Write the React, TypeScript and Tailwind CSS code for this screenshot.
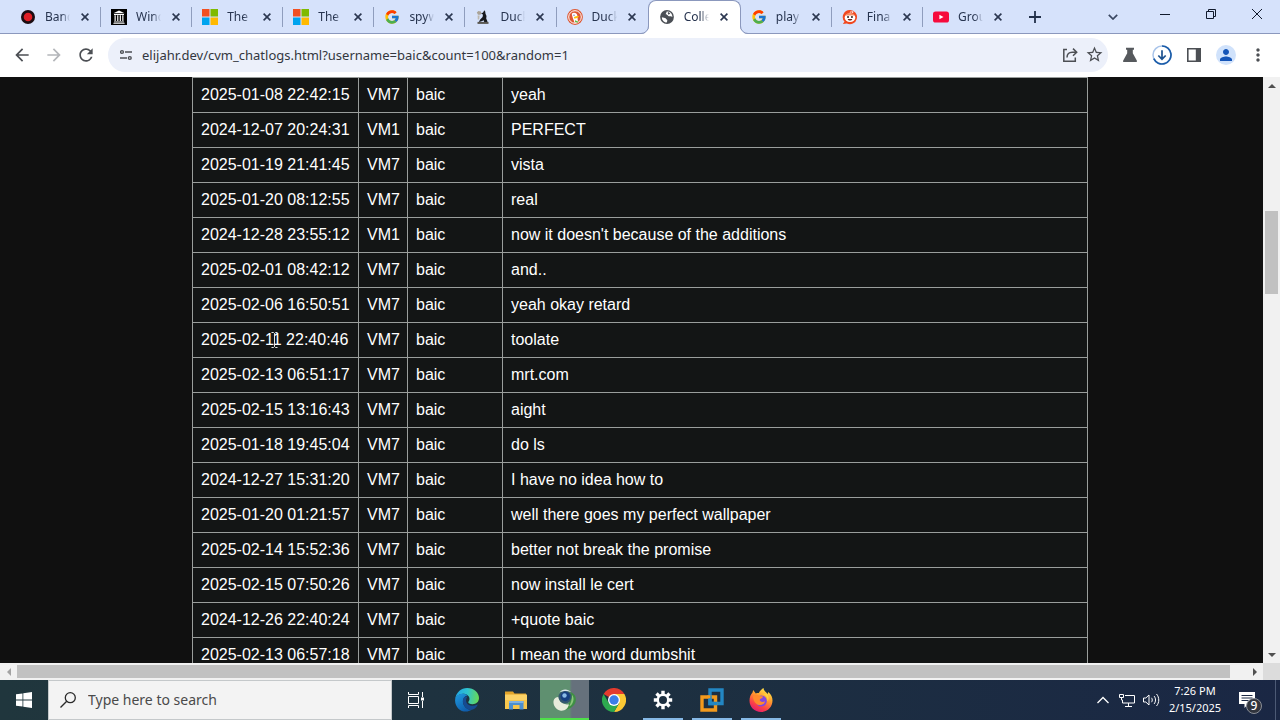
import { useId, type ReactNode } from "react";
import { MdArrowBack, MdArrowForward, MdRefresh, MdStarBorder, MdMoreVert, MdPerson } from "react-icons/md";
import { FcGoogle } from "react-icons/fc";

/* ---------- tab favicons ---------- */

const RecordIcon = () => (
  <svg viewBox="0 0 16 16" className="size-4">
    <circle cx="8" cy="8" r="7" fill="#1c0d12" />
    <circle cx="8" cy="8" r="4.3" fill="#e01f26" />
  </svg>
);

const ArchiveIcon = () => (
  <svg viewBox="0 0 16 16" className="size-4">
    <rect width="16" height="16" fill="#000" />
    <path d="M2.4 4.2 8 1.4l5.6 2.8zM3 5h10v.9H3zM3 12.4h10v.8H3zM2.4 13.8h11.2v1H2.4z" fill="#fff" />
    <path d="M3.5 6.3h1.3v5.7H3.5zM6.1 6.3h1.3v5.7H6.1zM8.7 6.3H10v5.7H8.7zM11.2 6.3h1.3v5.7h-1.3z" fill="#e8e8e8" />
  </svg>
);

const MicrosoftIcon = () => (
  <svg viewBox="0 0 16 16" className="size-4">
    <path d="M0 0h7.5v7.5H0z" fill="#f25022" />
    <path d="M8.5 0H16v7.5H8.5z" fill="#7fba00" />
    <path d="M0 8.5h7.5V16H0z" fill="#00a4ef" />
    <path d="M8.5 8.5H16V16H8.5z" fill="#ffb900" />
  </svg>
);

const StatueIcon = () => (
  <svg viewBox="0 0 16 16" className="size-4">
    <path d="M1.800 3.600 3.400 2l2.400.4.8 2-1.200 1.400H3z" fill="#aaa397" />
    <path d="M9.200 1.200l1 1.300.3 2.300 1 2.200-.3 2.500 1.300 3-.6 1.300H9.400l-.7-2.500L6 12.600l-2.200.3 1.400-2.300L7.600 8 8 5.500 6.200 4.800 8.300 3.200z" fill="#17191d" />
    <path d="M2.500 12.900h11v2h-11z" fill="#5a5751" />
    <path d="M2.600 6.500h2l-.4 3.900H2.800z" fill="#bdb8ae" />
  </svg>
);

const DuckIcon = () => (
  <svg viewBox="0 0 16 16" className="size-4">
    <circle cx="8" cy="8" r="7.900" fill="#de5833" />
    <circle cx="8" cy="8" r="6.300" fill="none" stroke="#fff" strokeWidth="1" />
    <path d="M5 4.600c1.300-1.500 4.500-1 5.200 1.400.5 1.800.2 4.900 1 7.100-1.200.6-2.500.8-3.700.6-.5-2.200-1.700-4.400-2.100-6.200-.3-1.200-.8-2.100-.4-2.900z" fill="#fff" />
    <path d="M7.200 8c1.200-1 3.200-.9 4.800-.9-.5 1.700-1.900 2.300-4 2.500-1.100 0-1.400-.9-.8-1.600z" fill="#fdc20a" />
    <path d="m8 11.200 3.100 1.200-.1 1.300-3-.6z" fill="#65bc46" />
    <circle cx="7" cy="6.200" r=".6" fill="#2d4f8e" />
  </svg>
);

const GlobeIcon = () => (
  <svg viewBox="0 0 16 16" className="size-4">
    <circle cx="8" cy="8" r="6.900" fill="#4b4f55" />
    <path d="M2.900 8.300 6 9.100c1 .3 1 1.200 1.800 1.500.8.3.6 1.700-.1 3C4.800 13.400 2.700 11 2.900 8.300zM7.300 2.800c.8 1-.8 1.400-.5 2.500.2.8 1.500.3 2.100 1.100.6.900 1.700 1 2.700.9.700 0 1.100.5 1.800.7.1-2.800-1.900-5-4.400-5.400z" fill="#fff" />
    <path d="M9.200 2.900c1 .5 1.600 1 2.100 1.700L9.500 5.700 8.700 4z" fill="#4b4f55" />
  </svg>
);

const RedditIcon = () => (
  <svg viewBox="0 0 18 18" className="size-[18px]">
    <path d="M9 1a8 8 0 1 1-3.600 15.200L1 17l1.800-2.800A8 8 0 0 1 9 1z" fill="#f1481f" />
    <ellipse cx="9" cy="9.800" rx="6" ry="4.700" fill="#fff" />
    <path d="M4.200 6.200C6 4.400 12 4.400 13.800 6.200l-.2 1.200H4.400z" fill="#f58c65" />
    <circle cx="6.800" cy="9" r="1.100" fill="#2c1b18" />
    <circle cx="11.200" cy="9" r="1.100" fill="#2c1b18" />
    <path d="M6.400 11.200h5.200c-.5 2.300-4.700 2.300-5.200 0z" fill="#64241c" />
    <path d="M9 4.900 9.600 3l2 .4" stroke="#fff" strokeWidth=".7" fill="none" />
    <circle cx="12" cy="3.500" r=".9" fill="#fff" />
  </svg>
);

const YoutubeIcon = () => (
  <svg viewBox="0 0 16 16" className="size-4">
    <rect y="2.500" width="16" height="11" rx="2.600" fill="#f60b3c" />
    <path d="m6.400 5.700 4.100 2.300-4.100 2.300z" fill="#fff" />
  </svg>
);

const Google = () => <FcGoogle className="size-4" />;

const tabs: { title: string; icon: ReactNode; active?: boolean; line?: boolean }[] = [
  { title: "Band", icon: <RecordIcon />, line: true },
  { title: "Wind", icon: <ArchiveIcon />, line: true },
  { title: "The", icon: <MicrosoftIcon />, line: true },
  { title: "The", icon: <MicrosoftIcon />, line: true },
  { title: "spyw", icon: <Google />, line: true },
  { title: "Duck", icon: <StatueIcon />, line: true },
  { title: "Duck", icon: <DuckIcon /> },
  { title: "Colle", icon: <GlobeIcon />, active: true },
  { title: "play", icon: <Google />, line: true },
  { title: "Fina", icon: <RedditIcon />, line: true },
  { title: "Grou", icon: <YoutubeIcon /> },
];

function TabStrip() {
  return (
    <header className="flex h-[34px] shrink-0 border-b border-[#8b98bd] bg-[#d6e2fb] pl-[10px]">
      <div role="tablist" className="flex max-w-[1004px] min-w-0 flex-1">
        {tabs.map((t, i) => (
          <div
            key={i}
            className={
              t.active
                ? "relative -mb-px flex min-w-0 flex-1 items-center rounded-t-lg border-x border-t border-[#8b98bd] bg-white pb-[2px] pl-[10px]"
                : "flex min-w-0 flex-1 items-center pl-[10px]"
            }
          >
            {t.active && (
              <>
                <svg viewBox="0 0 8 8" className="absolute bottom-0 -left-2 size-2">
                  <path d="M0 8a8 8 0 0 0 8-8v8z" fill="#fff" />
                  <path d="M0 7.500A7.500 7.500 0 0 0 7.500 0" fill="none" stroke="#8b98bd" />
                </svg>
                <svg viewBox="0 0 8 8" className="absolute -right-2 bottom-0 size-2">
                  <path d="M8 8a8 8 0 0 1-8-8v8z" fill="#fff" />
                  <path d="M8 7.500A7.500 7.500 0 0 1 .5 0" fill="none" stroke="#8b98bd" />
                </svg>
              </>
            )}
            <button role="tab" aria-selected={!!t.active} className="flex items-center gap-[9px]">
              <span className="flex w-4 justify-center">{t.icon}</span>
              <span className="w-[25px] overflow-hidden text-left text-xs whitespace-nowrap text-[#27344f] [mask-image:linear-gradient(to_right,#000_65%,transparent)]">
                {t.title}
              </span>
            </button>
            <button aria-label="Close tab" className="ml-[7px] flex size-4 items-center justify-center text-[#2b3750]">
              <svg viewBox="0 0 8 8" className="size-2">
                <path d="m.6.6 6.800 6.800M7.400.6.6 7.400" stroke="currentColor" strokeWidth="1.600" />
              </svg>
            </button>
            {t.line && <span className="ml-auto h-5 w-px bg-[#8f9dbd]" />}
          </div>
        ))}
      </div>
      <button aria-label="New tab" className="ml-[7px] flex w-7 shrink-0 items-center justify-center text-[#22304a]">
        <svg viewBox="0 0 12 12" className="size-3">
          <path d="M6 0v12M0 6h12" stroke="currentColor" strokeWidth="1.800" />
        </svg>
      </button>
      <button aria-label="Search tabs" className="mr-[15px] ml-auto flex w-7 shrink-0 items-center justify-center text-[#3a4761]">
        <svg viewBox="0 0 10 6" className="h-[6px] w-[10px]">
          <path d="m.8.8 4.200 4.200L9.200.8" fill="none" stroke="currentColor" strokeWidth="1.700" />
        </svg>
      </button>
      <div className="flex h-7 shrink-0 text-[#111a2c]">
        <button aria-label="Minimize" className="flex w-[46px] items-center justify-center">
          <svg viewBox="0 0 10 10" className="size-[10px]">
            <path d="M0 5.500h10" stroke="currentColor" />
          </svg>
        </button>
        <button aria-label="Restore" className="flex w-[46px] items-center justify-center">
          <svg viewBox="0 0 10 10" className="size-[10px]">
            <path d="M.5 2.500h7v7h-7zM2.500 2.500v-2h7v7h-2" fill="none" stroke="currentColor" />
          </svg>
        </button>
        <button aria-label="Close" className="flex w-[46px] items-center justify-center">
          <svg viewBox="0 0 10 10" className="size-[10px]">
            <path d="m0 0 10 10M10 0 0 10" stroke="currentColor" />
          </svg>
        </button>
      </div>
    </header>
  );
}

function ToolButton({ label, children }: { label: string; children: ReactNode }) {
  return (
    <button aria-label={label} className="flex size-8 shrink-0 items-center justify-center text-[#4c4f54]">
      {children}
    </button>
  );
}

function Toolbar() {
  return (
    <div className="flex h-[43px] shrink-0 items-center bg-white px-[6px] pb-[2px]">
      <ToolButton label="Back">
        <MdArrowBack className="size-5" />
      </ToolButton>
      <ToolButton label="Forward">
        <MdArrowForward className="size-5 text-[#b4b6ba]" />
      </ToolButton>
      <ToolButton label="Reload">
        <MdRefresh className="size-5" />
      </ToolButton>
      <div className="mx-[6px] flex h-[34px] min-w-0 flex-1 items-center rounded-full bg-[#ecf0fa] pr-[2px] pl-3">
        <button aria-label="Site information" className="mr-[10px] text-[#4c4f54]">
          <svg viewBox="0 0 12 12" className="size-3">
            <g fill="none" stroke="currentColor" strokeWidth="1.400">
              <circle cx="2" cy="3" r="1.400" />
              <path d="M5 3h7M0 9h7" />
              <circle cx="9.800" cy="9" r="1.400" />
            </g>
          </svg>
        </button>
        <input
          aria-label="Address"
          defaultValue="elijahr.dev/cvm_chatlogs.html?username=baic&count=100&random=1"
          className="h-full min-w-0 flex-1 bg-transparent text-[13px] text-[#33373e] outline-none"
        />
        <button aria-label="Share" className="flex size-6 items-center justify-center text-[#4c4f54]">
          <svg viewBox="0 0 16 16" className="size-4">
            <path d="M5 2.500H1.800v11.700h11.500V10.500M5 10.500c0-3.600 2-5.300 5.200-5.300h4M11 1.600l3.700 3.600L11 8.800" fill="none" stroke="currentColor" strokeWidth="1.500" />
          </svg>
        </button>
        <button aria-label="Bookmark" className="flex size-6 items-center justify-center text-[#4c4f54]">
          <MdStarBorder className="size-[19px]" />
        </button>
      </div>
      <ToolButton label="Labs">
        <svg viewBox="0 0 16 16" className="size-4">
          <path d="M4 .8h8v1.900h-1.200v3.500l4 7.200c.4.900 0 1.600-.9 1.600H2.100c-.9 0-1.300-.7-.9-1.600l4-7.200V2.700H4z" fill="#56595d" />
        </svg>
      </ToolButton>
      <ToolButton label="Downloads">
        <svg viewBox="0 0 20 20" className="size-5">
          <circle cx="10" cy="10" r="9" fill="none" stroke="#a9c4ea" strokeWidth="1.500" />
          <path d="M10 1a9 9 0 1 1-8.200 12.700" fill="none" stroke="#1b5ca8" strokeWidth="1.700" />
          <path d="M10 5.300v8.700M6.300 10.500l3.700 3.700 3.700-3.700" fill="none" stroke="#1d528f" strokeWidth="1.700" />
        </svg>
      </ToolButton>
      <ToolButton label="Side panel">
        <svg viewBox="0 0 14 14" className="size-[14px]">
          <path d="M.8.800h12.400v12.400H.8z" fill="none" stroke="currentColor" strokeWidth="1.600" />
          <path d="M8.800 0H14v14H8.800z" fill="currentColor" />
        </svg>
      </ToolButton>
      <ToolButton label="Profile">
        <span className="flex size-5 items-center justify-center rounded-full bg-[#d0e2fb]">
          <MdPerson className="size-[18px] text-[#1455b8]" />
        </span>
      </ToolButton>
      <ToolButton label="Menu">
        <MdMoreVert className="size-5" />
      </ToolButton>
    </div>
  );
}

/* ---------- chat log ---------- */

const logs = [
  ["2025-01-08 22:42:15", "VM7", "yeah"],
  ["2024-12-07 20:24:31", "VM1", "PERFECT"],
  ["2025-01-19 21:41:45", "VM7", "vista"],
  ["2025-01-20 08:12:55", "VM7", "real"],
  ["2024-12-28 23:55:12", "VM1", "now it doesn't because of the additions"],
  ["2025-02-01 08:42:12", "VM7", "and.."],
  ["2025-02-06 16:50:51", "VM7", "yeah okay retard"],
  ["2025-02-11 22:40:46", "VM7", "toolate"],
  ["2025-02-13 06:51:17", "VM7", "mrt.com"],
  ["2025-02-15 13:16:43", "VM7", "aight"],
  ["2025-01-18 19:45:04", "VM7", "do ls"],
  ["2024-12-27 15:31:20", "VM7", "I have no idea how to"],
  ["2025-01-20 01:21:57", "VM7", "well there goes my perfect wallpaper"],
  ["2025-02-14 15:52:36", "VM7", "better not break the promise"],
  ["2025-02-15 07:50:26", "VM7", "now install le cert"],
  ["2024-12-26 22:40:24", "VM7", "+quote baic"],
  ["2025-02-13 06:57:18", "VM7", "I mean the word dumbshit"],
];
const pointerRow = 7;

function ChatLog() {
  const cell = "relative border border-[#9a9e9c] p-2 leading-[18px] whitespace-nowrap";
  return (
    <main className="min-w-0 flex-1 overflow-hidden bg-[#101010] pr-[175px] pl-48">
      <table className="w-full table-fixed border-collapse bg-[#131515] font-['Liberation_Sans',Arial,sans-serif] text-base text-white">
        <colgroup>
          <col className="w-[166px]" />
          <col className="w-[49px]" />
          <col className="w-[95px]" />
          <col />
        </colgroup>
        <tbody>
          {logs.map(([time, vm, message], i) => (
            <tr key={i}>
              <td className={cell}>
                {time}
                {i === pointerRow && (
                  <svg viewBox="0 0 7 16" className="absolute top-[9px] left-[78px] h-4 w-[7px]">
                    <path d="M.5.5h2l1 1 1-1h2M.5 15.500h2l1-1 1 1h2M3.500 1.500v13" fill="none" stroke="#e4e4e4" />
                  </svg>
                )}
              </td>
              <td className={cell}>{vm}</td>
              <td className={cell}>baic</td>
              <td className={cell}>{message}</td>
            </tr>
          ))}
        </tbody>
      </table>
    </main>
  );
}

function Arrow({ d, color }: { d: string; color: string }) {
  return (
    <svg viewBox="0 0 8 8" className="size-2">
      <path d={d} fill={color} />
    </svg>
  );
}

function VerticalScrollbar() {
  return (
    <div className="flex w-[17px] shrink-0 flex-col bg-[#f1f1f1]">
      <button aria-label="Scroll up" className="flex h-[17px] items-center justify-center">
        <Arrow d="M0 6 4 2l4 4z" color="#505050" />
      </button>
      <div className="flex flex-1 flex-col px-[2px]">
        <div className="grow-[117]" />
        <div className="grow-[83] bg-[#c1c1c1]" />
        <div className="grow-[352]" />
      </div>
      <button aria-label="Scroll down" className="flex h-[17px] items-center justify-center">
        <Arrow d="m0 2 4 4 4-4z" color="#505050" />
      </button>
    </div>
  );
}

function HorizontalScrollbar() {
  return (
    <div className="flex h-[17px] shrink-0 bg-[#f1f1f1]">
      <button aria-label="Scroll left" className="flex w-[17px] items-center justify-center">
        <Arrow d="M6 0 2 4l4 4z" color="#a3a3a3" />
      </button>
      <div className="flex flex-1 py-[2px]">
        <div className="grow-[1213] bg-[#c1c1c1]" />
        <div className="grow-[16]" />
      </div>
      <button aria-label="Scroll right" className="flex w-[17px] items-center justify-center">
        <Arrow d="m2 0 4 4-4 4z" color="#505050" />
      </button>
      <div className="w-[17px] bg-[#dcdcdc]" />
    </div>
  );
}

/* ---------- taskbar ---------- */

const TaskViewIcon = () => (
  <svg viewBox="0 0 16 16" className="size-4" fill="none" stroke="#fff">
    <path d="M.5 4.500h10v7H.5zM.5 0v2.500h10V0M.5 16v-2.500h10V16M14.500 0v5M14.500 9v7" />
    <path d="M13 5.500h3v3h-3z" fill="#fff" stroke="none" />
  </svg>
);

function EdgeIcon() {
  const id = useId();
  return (
    <svg viewBox="0 0 24 24" className="size-6">
      <defs>
        <linearGradient id={id + "a"} x1="0" y1=".3" x2="1" y2=".4">
          <stop offset="0" stopColor="#20a5e6" />
          <stop offset=".5" stopColor="#2fc3cf" />
          <stop offset="1" stopColor="#66d957" />
        </linearGradient>
        <linearGradient id={id + "b"} x1="0" y1="0" x2=".6" y2="1">
          <stop offset="0" stopColor="#1f9be0" />
          <stop offset="1" stopColor="#0f5dac" />
        </linearGradient>
      </defs>
      <path d="M.2 11C1 4.500 6 0 12.200 0 19 0 24 4.600 24 10c0 3.800-3 6.200-6.500 6.200-2.700 0-4.200-.9-4.200-1.900 0-.8 1.200-1.300 1.200-3.300C14.500 8 11.600 5.800 8 5.800 4 5.800 1.500 8 .2 11z" fill={`url(#${id}a)`} />
      <path d="M.1 12C.3 8.300 3.500 5.800 8 5.800c2 0 3.500.7 4.600 1.800C9.700 7.800 7.500 11 8 14.500c.6 4 4 7.300 8.500 7.300C10 26.500-.2 21.500.1 12z" fill={`url(#${id}b)`} />
      <path d="M8.800 9.800c-2.600 4.500.5 11 6.700 12.100 3 .3 5.800-2.400 7-4.700.3-.6-.2-.8-.7-.5-4.200 2.200-10.500.8-10.700-4.200 0-1.700.7-3 1.500-3.800-1.300-.3-2.900-.1-3.800 1.100z" fill="#164b91" />
    </svg>
  );
}

const FolderIcon = () => (
  <svg viewBox="0 0 24 24" className="size-6">
    <path d="M1 3.500h8l1.500 2H22V9H1z" fill="#e2a42a" />
    <path d="M1 6.500h22v14.500H1z" fill="#fbd267" />
    <path d="M1 12h22v9H1z" fill="#f7c64c" />
    <path d="M5 13h14.500v8.500h-4V17H9v4.500H5z" fill="#4c8fcf" />
    <path d="M5 13h14.500v2H5z" fill="#7fb2e2" />
  </svg>
);

const RecorderIcon = () => (
  <svg viewBox="0 0 24 24" className="size-6">
    <path d="M17.500 4c6 2 7 9 3 13.500-2.500 3-7 4.500-8.500 4 4-4 6-10 5.500-17.500z" fill="#3f8f45" />
    <path d="M19 7c2 2 2 6 0 9-1 1.500-2 2-3 2.500C18 15 19 11 19 7z" fill="#8cc77c" />
    <path d="M.5 13c.5-2.500 2.500-4 5-4 .5 5 4.500 7.500 10.500 7.500C15 21 11 23.500 7 22.500S0 17.500.5 13z" fill="#e7ebdb" />
    <circle cx="12" cy="9" r="6.500" fill="#33566f" />
    <circle cx="12.300" cy="8.500" r="4.700" fill="#173f80" />
    <circle cx="11.500" cy="7.500" r="2.200" fill="#8bbbe5" />
    <path d="M6.500 4.500C9 .5 15 .5 18 4c-4-1.500-8-1.300-11.500.5z" fill="#dbe6e8" />
  </svg>
);

const ChromeIcon = () => (
  <svg viewBox="0 0 24 24" className="size-6">
    <path d="M12 12 1.600 6A12 12 0 0 1 22.400 6z" fill="#e33b2e" />
    <path d="M12 12V6h10.400A12 12 0 0 1 12 24l5.200-9z" fill="#fcc934" />
    <path d="M1.600 6A12 12 0 0 0 12 24l5.200-9-5.200-1-5.200 1z" fill="#2da94f" />
    <circle cx="12" cy="12" r="6" fill="#fff" />
    <circle cx="12" cy="12" r="4.700" fill="#3b7de8" />
  </svg>
);

const GearIcon = () => (
  <svg viewBox="0 0 20 20" className="size-5">
    <g stroke="#fff" strokeWidth="3.400">
      <path d="M10 .8v3.700M10 15.500v3.700M.8 10h3.700M15.500 10h3.700M3.500 3.500l2.600 2.600M13.900 13.900l2.600 2.600M16.500 3.500l-2.600 2.600M6.100 13.900l-2.600 2.600" />
    </g>
    <circle cx="10" cy="10" r="5.200" fill="none" stroke="#fff" strokeWidth="2.400" />
  </svg>
);

const VmwareIcon = () => (
  <svg viewBox="0 0 24 24" className="size-6" fill="none">
    <path d="M10 2h12v13.500H10z" stroke="#2387c3" strokeWidth="3.400" />
    <path d="M2 9h13.500v13H2z" stroke="#f39a1d" strokeWidth="3.400" />
    <path d="M10 7.300v8.200h7.200" stroke="#2387c3" strokeWidth="3.400" />
    <path d="M7.300 7.300h3v3h-3z" fill="#f39a1d" />
  </svg>
);

function FirefoxIcon() {
  const id = useId();
  return (
    <svg viewBox="0 0 24 24" className="size-6">
      <defs>
        <linearGradient id={id} x1=".8" y1="0" x2=".3" y2="1">
          <stop offset="0" stopColor="#fff04f" />
          <stop offset=".4" stopColor="#ff9d2e" />
          <stop offset=".75" stopColor="#fb4048" />
          <stop offset="1" stopColor="#e01c70" />
        </linearGradient>
      </defs>
      <path d="M3.500 4.500 4.200 2l2.600 3.500c1-.5 2-.6 3-.5C11 2.500 13 1 14.500 0c0 2.700 2.500 4 4.200 6l.6-2c3 2.500 4.200 5.500 4.200 8.500C23.500 19 18.500 24 12 24S.5 19 .5 12.800c0-3.500 1-6.300 3-8.300z" fill={`url(#${id})`} />
      <circle cx="12.300" cy="13" r="5.500" fill="#8148e0" />
      <path d="M4 8c2-1.500 5-1.500 6.500 0 2 .3 3.500 0 3.500 1-.5 1.500-3 1.300-3.300 3 .6 2.200 3.300 2.500 5.300 1.200-.6 3.800-6 5.300-9 2.300C5 13.500 4 11 4 8z" fill="#ff8b2c" />
      <path d="M14 6c3 1 5 4 4.300 7.500 2-2 1.700-5-.3-7.500z" fill="#ffd33e" />
    </svg>
  );
}

const apps: { name: string; icon: ReactNode; state: "idle" | "open" | "active" }[] = [
  { name: "Microsoft Edge", icon: <EdgeIcon />, state: "idle" },
  { name: "File Explorer", icon: <FolderIcon />, state: "idle" },
  { name: "Recorder", icon: <RecorderIcon />, state: "active" },
  { name: "Google Chrome", icon: <ChromeIcon />, state: "idle" },
  { name: "Settings", icon: <GearIcon />, state: "open" },
  { name: "VMware", icon: <VmwareIcon />, state: "open" },
  { name: "Firefox", icon: <FirefoxIcon />, state: "open" },
];

function Taskbar() {
  return (
    <footer className="flex h-10 shrink-0 bg-linear-to-r from-[#20363d] via-[#1d3040] to-[#1a2744] text-white">
      <button aria-label="Start" className="flex w-12 shrink-0 items-center justify-center">
        <svg viewBox="0 0 16 16" className="size-4">
          <path d="M0 2.300 6.500 1.400v6.200H0zM7.300 1.300 16 0v7.600H7.300zM0 8.400h6.500v6.200L0 13.700zM7.300 8.400H16V16l-8.700-1.300z" fill="#fff" />
        </svg>
      </button>
      <label className="flex w-[344px] items-center gap-3 border border-[#c4c8ca] bg-[#f3f3f3] pl-[11px]">
        <svg viewBox="0 0 16 16" className="size-4 shrink-0" fill="none" stroke="#2a2a2a" strokeWidth="1.300">
          <circle cx="10.300" cy="5.700" r="5" />
          <path d="M6.700 9.300.5 15.500" />
        </svg>
        <input
          aria-label="Search"
          placeholder="Type here to search"
          className="w-full min-w-0 bg-transparent text-sm outline-none placeholder:text-[#4a4a4a]"
        />
      </label>
      <button aria-label="Task view" className="mr-[2px] flex w-12 shrink-0 items-center justify-center">
        <TaskViewIcon />
      </button>
      {apps.map((a) => (
        <button
          key={a.name}
          aria-label={a.name}
          className={
            a.state === "active"
              ? "flex w-[49px] shrink-0 flex-col items-center bg-linear-to-r from-[#5f9070] from-60% to-[#66717c] to-65%"
              : "flex w-[49px] shrink-0 flex-col items-center"
          }
        >
          <span className="flex h-[38px] items-center pt-[2px]">{a.icon}</span>
          {a.state === "active" && <span className="h-[2px] w-full bg-[#4fe04a]" />}
          {a.state === "open" && <span className="h-[2px] w-10 bg-[#86b9e6]" />}
        </button>
      ))}
      <div className="ml-auto flex shrink-0 items-center">
        <button aria-label="Show hidden icons" className="flex w-6 justify-center">
          <svg viewBox="0 0 12 8" className="h-2 w-3">
            <path d="m.5 7 5.500-5.500L11.500 7" fill="none" stroke="#fff" strokeWidth="1.300" />
          </svg>
        </button>
        <button aria-label="Network" className="flex w-6 justify-center">
          <svg viewBox="0 0 16 14" className="h-[14px] w-4" fill="none" stroke="#fff">
            <path d="M6 2.500h9.500v7.500h-12V7M9.500 10v3M6 13.500h7M.5 1.500h4v3h-4zM2.500 4.500V7h1" />
          </svg>
        </button>
        <button aria-label="Volume" className="flex w-6 justify-center">
          <svg viewBox="0 0 17 14" className="h-[14px] w-[17px]" fill="none" stroke="#fff">
            <path d="M.5 5h2.300L6 2v10L2.800 9H.5zM8.500 4.800c1 1.200 1 3.200 0 4.400M11 3c2 2.200 2 5.800 0 8M13.500 1c3 3.400 3 8.600 0 12" />
          </svg>
        </button>
        <button className="flex w-16 flex-col items-center pb-[2px] text-[11px] leading-[17px]">
          <span>7:26 PM</span>
          <span>2/15/2025</span>
        </button>
        <button aria-label="Notifications" className="relative ml-2 flex w-6 justify-center">
          <svg viewBox="0 0 16 16" className="size-4">
            <path d="M0 0h16v12H9l-3.500 4V12H0z" fill="#fff" />
            <path d="M2.500 3.500h11M2.500 6h11M2.500 8.500h7" stroke="#1b2945" />
          </svg>
          <span className="absolute top-[6px] left-[11px] flex size-4 items-center justify-center rounded-full border border-[#8b8f98] bg-[#30343d] text-xs leading-none font-medium">
            9
          </span>
        </button>
        <span className="mr-1 ml-4 h-10 w-px bg-[#4c5a75]" />
      </div>
    </footer>
  );
}

export default function App() {
  return (
    <div className="flex h-screen flex-col overflow-hidden font-['Noto_Sans','Open_Sans',sans-serif]">
      <TabStrip />
      <Toolbar />
      <div className="flex min-h-0 flex-1">
        <ChatLog />
        <VerticalScrollbar />
      </div>
      <HorizontalScrollbar />
      <Taskbar />
    </div>
  );
}
